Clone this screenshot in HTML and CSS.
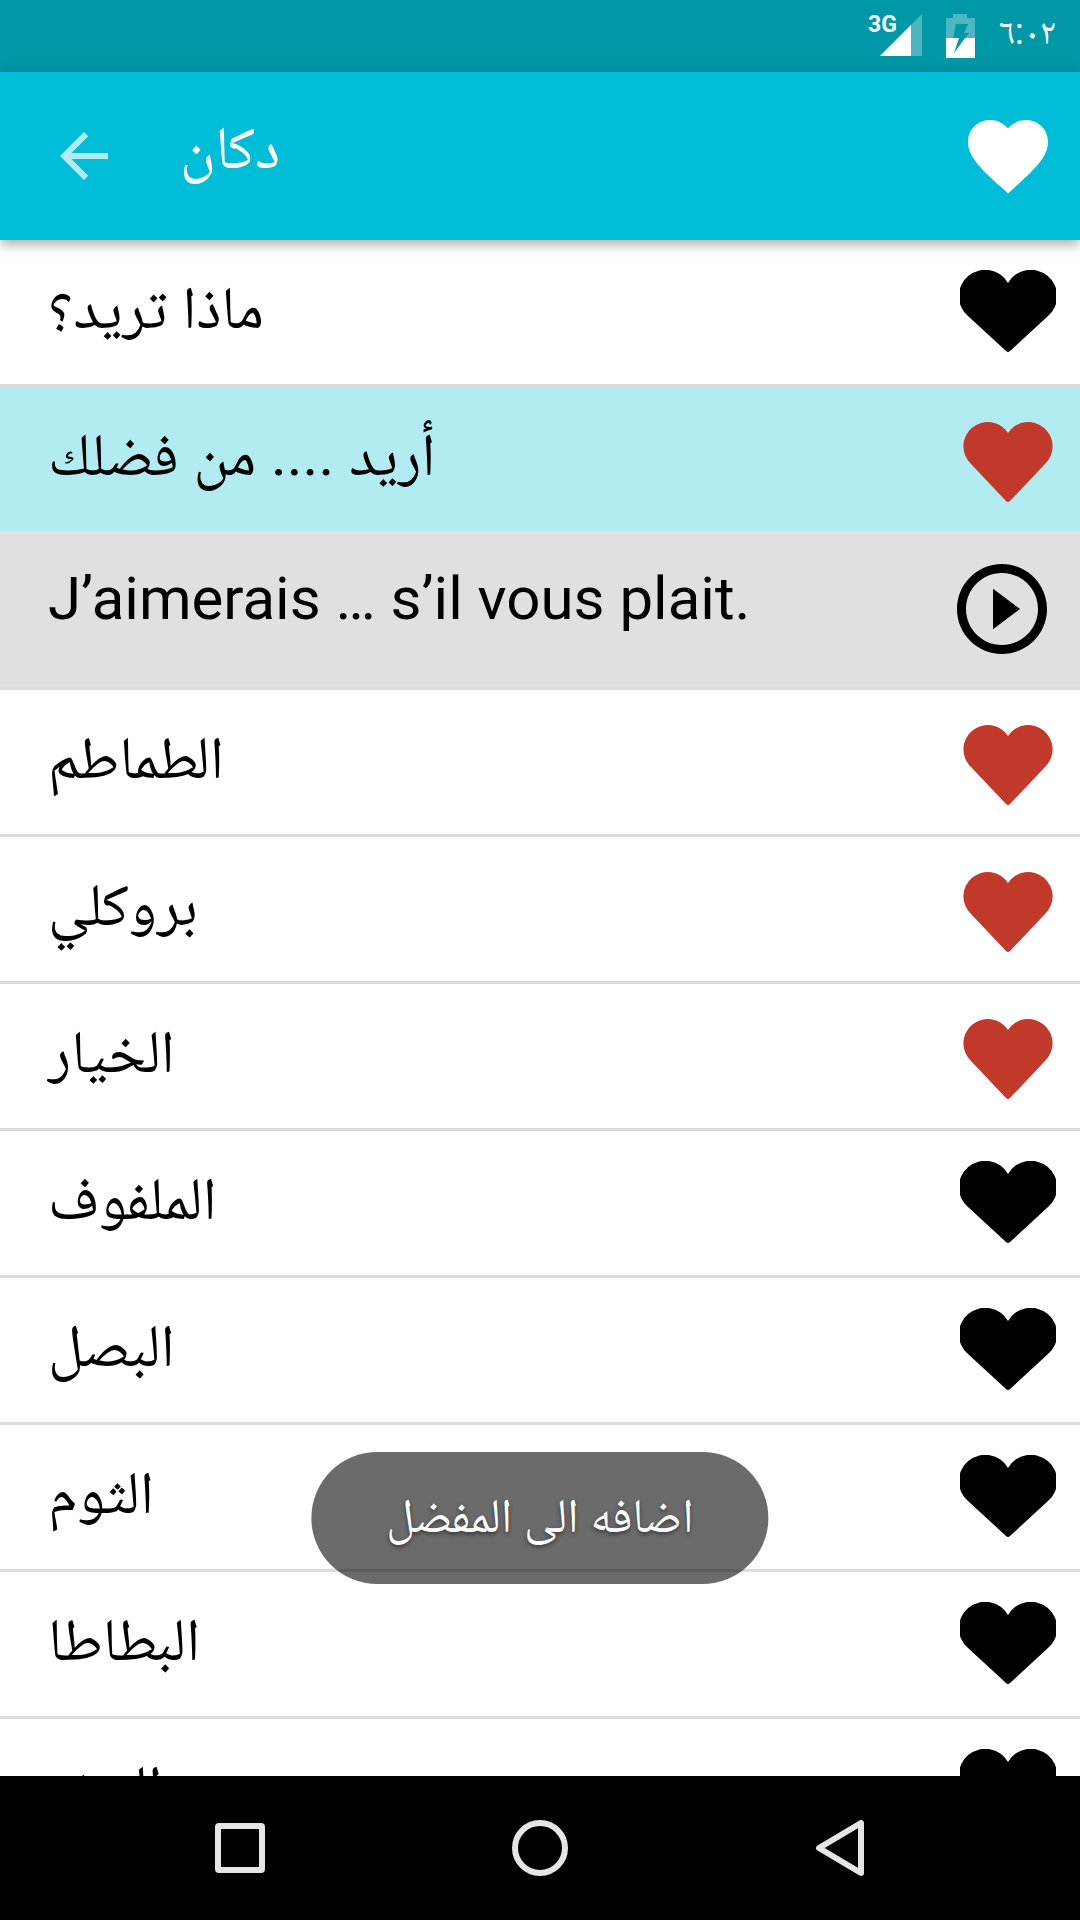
FILE: index.html
```
<!DOCTYPE html>
<html lang="ar">
<head>
  <meta charset="UTF-8">
  <meta name="viewport" content="width=device-width, initial-scale=1">
  <title>دكان</title>
  <link rel="stylesheet" href="styles.css">
</head>
<body>
  <!-- shared icons -->
  <svg class="sprite" aria-hidden="true">
    <symbol id="heart-black" viewBox="0 0 96 84">
      <path d="M48 13A26.300 26.300 0 1 0 8 46L46 81Q48 83 50 81L88 46A26.300 26.300 0 1 0 48 13Z"/>
    </symbol>
    <symbol id="heart-red" viewBox="0 0 96 84">
      <path d="M48 11A24.300 24.300 0 1 0 11 42L46 79Q48 81 50 79L85 42A24.300 24.300 0 1 0 48 11Z"/>
    </symbol>
  </svg>

  <div class="screen">
    <div class="statusbar">
      <svg class="signal" viewBox="0 0 60 44" aria-hidden="true">
        <path class="dim" d="M60 0V42H18Z"/>
        <path d="M49 11V42H18Z"/>
        <text x="6" y="18">3G</text>
      </svg>
      <svg class="battery" viewBox="0 0 29 44" aria-hidden="true">
        <path class="dim" d="M7 0H21V4H29V24H0V4H7Z"/>
        <path d="M0 24H29V44H0Z"/>
        <path class="bolt" d="M10 10H22L18 19H23L8 39L13 24H7Z"/>
      </svg>
      <span class="time">٦:٠٢</span>
    </div>

    <header class="appbar">
      <button class="icon-btn back" aria-label="رجوع">
        <svg viewBox="0 0 24 24"><path d="M20 11H7.830l5.590-5.590L12 4l-8 8 8 8 1.410-1.410L7.830 13H20z"/></svg>
      </button>
      <h1 class="title" dir="rtl">دكان</h1>
      <button class="icon-btn favorites" aria-label="المفضل">
        <svg viewBox="0 0 24 24"><path d="M12 21.350l-1.450-1.320C5.400 15.360 2 12.280 2 8.500 2 5.420 4.420 3 7.500 3c1.740 0 3.410.810 4.500 2.090C13.090 3.810 14.760 3 16.500 3 19.580 3 22 5.420 22 8.500c0 3.780-3.400 6.860-8.550 11.540L12 21.350z"/></svg>
      </button>
    </header>

    <main class="content">
      <ul class="phrases">
        <li class="row">
          <span class="phrase" dir="rtl">ماذا تريد؟</span>
          <button class="icon-btn fav" aria-label="اضافه"><svg><use href="#heart-black"/></svg></button>
        </li>
        <li class="row selected">
          <span class="phrase" dir="rtl">أريد .... من فضلك</span>
          <button class="icon-btn fav on" aria-label="حذف"><svg><use href="#heart-red"/></svg></button>
        </li>
        <li class="row translation">
          <span class="phrase" lang="fr">J’aimerais … s’il vous plait.</span>
          <button class="icon-btn play" aria-label="تشغيل">
            <svg viewBox="0 0 24 24"><path d="M10 16.500l6-4.500-6-4.500v9zM12 2C6.480 2 2 6.480 2 12s4.480 10 10 10 10-4.480 10-10S17.520 2 12 2zm0 18c-4.410 0-8-3.590-8-8s3.590-8 8-8 8 3.590 8 8-3.590 8-8 8z"/></svg>
          </button>
        </li>
        <li class="row">
          <span class="phrase" dir="rtl">الطماطم</span>
          <button class="icon-btn fav on" aria-label="حذف"><svg><use href="#heart-red"/></svg></button>
        </li>
        <li class="row">
          <span class="phrase" dir="rtl">بروكلي</span>
          <button class="icon-btn fav on" aria-label="حذف"><svg><use href="#heart-red"/></svg></button>
        </li>
        <li class="row">
          <span class="phrase" dir="rtl">الخيار</span>
          <button class="icon-btn fav on" aria-label="حذف"><svg><use href="#heart-red"/></svg></button>
        </li>
        <li class="row">
          <span class="phrase" dir="rtl">الملفوف</span>
          <button class="icon-btn fav" aria-label="اضافه"><svg><use href="#heart-black"/></svg></button>
        </li>
        <li class="row">
          <span class="phrase" dir="rtl">البصل</span>
          <button class="icon-btn fav" aria-label="اضافه"><svg><use href="#heart-black"/></svg></button>
        </li>
        <li class="row">
          <span class="phrase" dir="rtl">الثوم</span>
          <button class="icon-btn fav" aria-label="اضافه"><svg><use href="#heart-black"/></svg></button>
        </li>
        <li class="row">
          <span class="phrase" dir="rtl">البطاطا</span>
          <button class="icon-btn fav" aria-label="اضافه"><svg><use href="#heart-black"/></svg></button>
        </li>
        <li class="row">
          <span class="phrase" dir="rtl">الجزر</span>
          <button class="icon-btn fav" aria-label="اضافه"><svg><use href="#heart-black"/></svg></button>
        </li>
      </ul>
    </main>

    <div class="toast" role="status" dir="rtl">اضافه الى المفضل</div>

    <nav class="navbar">
      <button class="nav-btn" aria-label="التطبيقات">
        <svg viewBox="0 0 60 60"><rect x="8" y="8" width="44" height="44" rx="1"/></svg>
      </button>
      <button class="nav-btn" aria-label="الرئيسية">
        <svg viewBox="0 0 60 60"><circle cx="30" cy="30" r="25"/></svg>
      </button>
      <button class="nav-btn" aria-label="رجوع">
        <svg viewBox="0 0 60 60"><path d="M51 5V55L9 30Z"/></svg>
      </button>
    </nav>
  </div>
</body>
</html>
```

FILE: styles.css
```
* {
  box-sizing: border-box;
}
body {
  margin: 0;
  font-family: Roboto, "Noto Naskh Arabic", "DejaVu Sans", sans-serif;
  color: #000;
  background-color: #fff;
}
.sprite {
  display: none;
}
.screen {
  position: relative;
  display: flex;
  flex-direction: column;
  height: 100vh;
  overflow: hidden;
}

/* status bar */
.statusbar {
  display: flex;
  flex: none;
  align-items: center;
  justify-content: flex-end;
  gap: 24px;
  height: 72px;
  padding-right: 24px;
  background-color: #0097a7;
  color: #fff;
}
.statusbar svg {
  height: 44px;
  overflow: visible;
  fill: #fff;
}
.signal {
  width: 60px;
}
.signal text {
  font-size: 23px;
  font-weight: bold;
}
.battery {
  width: 29px;
}
.statusbar .dim {
  fill: #4db6c1;
}
.statusbar .bolt {
  fill: #0097a7;
}
.time {
  padding-bottom: 8px;
  font-size: 36px;
  line-height: 48px;
}

/* app bar */
.appbar {
  position: relative;
  display: flex;
  flex: none;
  align-items: center;
  height: 168px;
  padding: 0 24px 0 48px;
  background-color: #00bcd7;
  color: #fff;
  box-shadow: 0 4px 12px rgba(0,0,0,0.35);
}
.title {
  flex: 1;
  margin: 0;
  padding: 0 0 16px 60px;
  font-size: 60px;
  font-weight: normal;
  line-height: 72px;
  text-align: left;
}
.icon-btn {
  display: block;
  flex: none;
  padding: 0;
  border: none;
  background: none;
  color: inherit;
  cursor: pointer;
}
.icon-btn svg {
  display: block;
  width: 100%;
  height: 100%;
  fill: currentColor;
}
.back {
  width: 72px;
  height: 72px;
  opacity: 0.7;
}
.favorites {
  width: 96px;
  height: 96px;
}

/* phrase list */
.content {
  flex: 1;
  min-height: 0;
  overflow: hidden;
}
.phrases {
  margin: 0;
  padding: 0;
  list-style: none;
}
.row {
  display: flex;
  align-items: flex-start;
  justify-content: space-between;
  min-height: 147px;
  padding: 30px 24px 24px 48px;
  border-bottom: 3px solid #dcdcdc;
}
.phrase {
  padding-top: 2px;
  font-size: 60px;
  line-height: 72px;
}
.fav {
  width: 96px;
  height: 84px;
}
.fav.on {
  margin-top: 5px;
  color: #c0392b;
}
.selected {
  background-color: #b2ebf2;
  border-bottom-color: #e0e0e0;
}
.translation {
  min-height: 156px;
  padding-top: 21px;
  background-color: #e0e0e0;
}
.translation .phrase {
  padding-top: 8px;
}
.play {
  width: 108px;
  height: 108px;
}

/* message over the list */
.toast {
  position: absolute;
  bottom: 336px;
  left: 50%;
  transform: translateX(-50%);
  padding: 28px 75px 32px;
  border-radius: 66px;
  background-color: rgba(0,0,0,0.58);
  color: #fff;
  font-size: 48px;
  line-height: 72px;
  white-space: nowrap;
  text-shadow: 0 2px 4px rgba(0,0,0,0.5);
}

/* system buttons */
.navbar {
  display: flex;
  flex: none;
  height: 144px;
  padding: 0 90px;
  background-color: #000;
}
.nav-btn {
  display: flex;
  flex: 1;
  align-items: center;
  justify-content: center;
  padding: 0;
  border: none;
  background: none;
  cursor: pointer;
}
.nav-btn svg {
  width: 60px;
  height: 60px;
  fill: none;
  stroke: #e6e6e6;
  stroke-width: 6;
  stroke-linejoin: round;
}
```
